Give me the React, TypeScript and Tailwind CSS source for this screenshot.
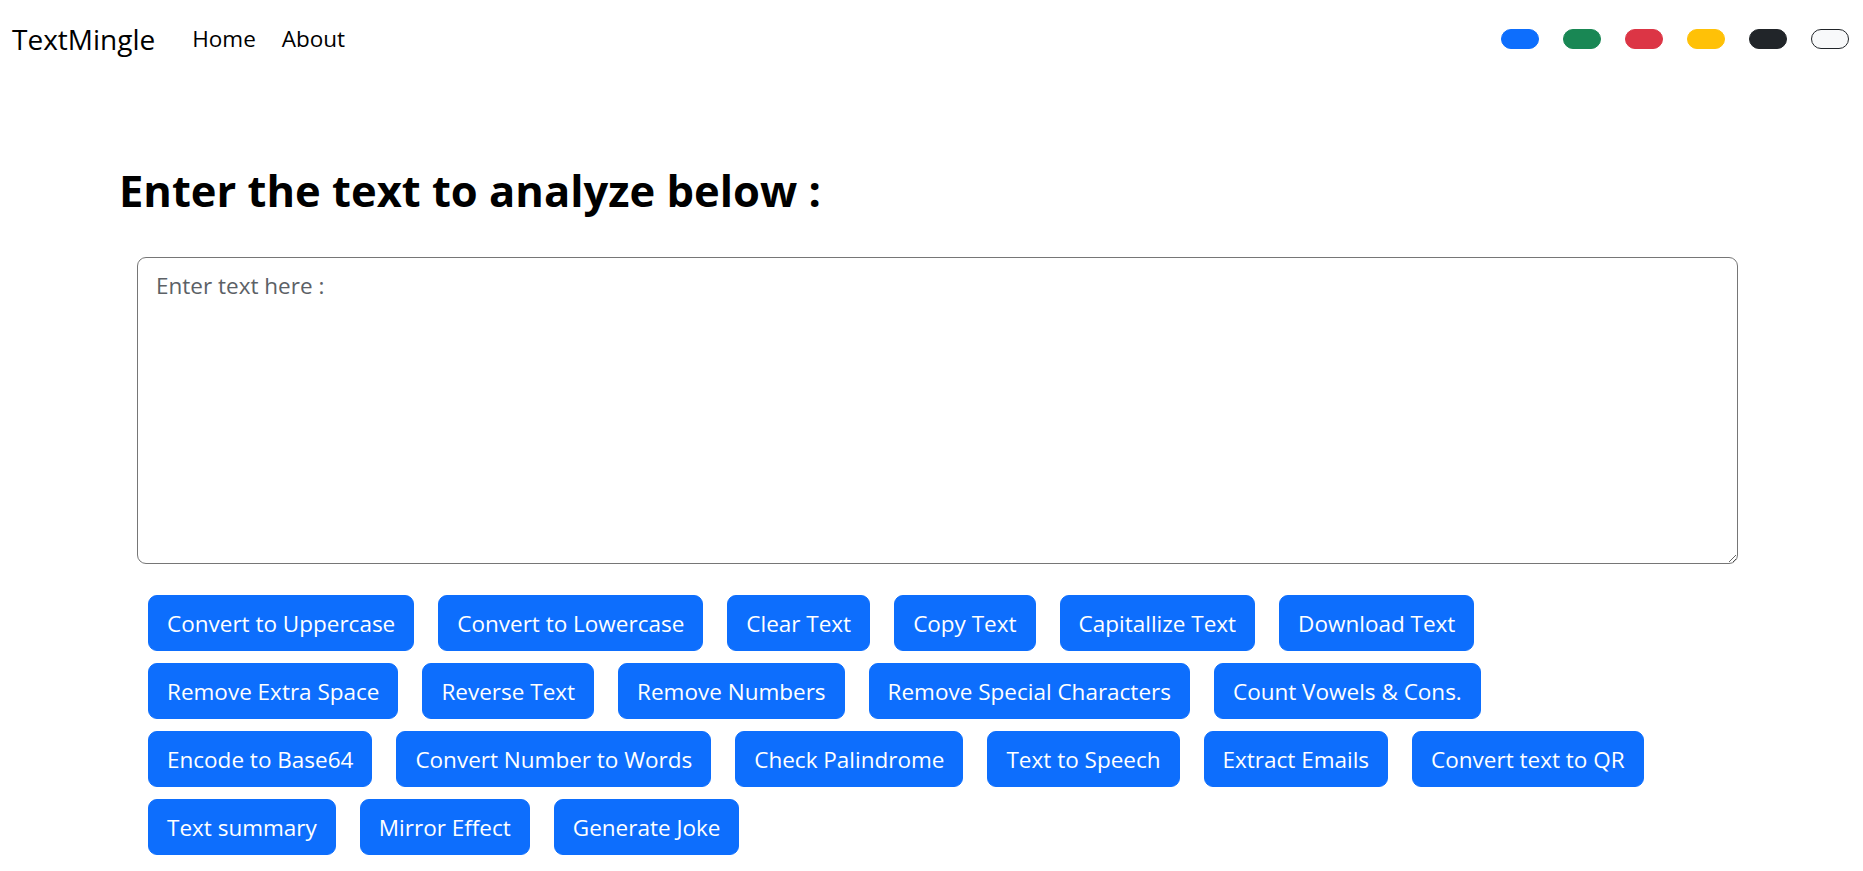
import React from "react";

const themes = [
  "bg-[#0d6efd] border-[#0d6efd]",
  "bg-[#198754] border-[#198754]",
  "bg-[#dc3545] border-[#dc3545]",
  "bg-[#ffc107] border-[#ffc107]",
  "bg-[#212529] border-[#212529]",
  "bg-[#f8f9fa] border-[#212529]",
];

const rows = [
  ["Convert to Uppercase", "Convert to Lowercase", "Clear Text", "Copy Text", "Capitallize Text", "Download Text"],
  ["Remove Extra Space", "Reverse Text", "Remove Numbers", "Remove Special Characters", "Count Vowels & Cons."],
  ["Encode to Base64", "Convert Number to Words", "Check Palindrome", "Text to Speech", "Extract Emails", "Convert text to QR"],
  ["Text summary", "Mirror Effect", "Generate Joke"],
];

const Navbar = () => {
  return (
    <nav className="flex h-[78px] items-center justify-between pl-[12px] pr-[14px]">
      <div className="flex items-center">
        <a className="text-[28px] text-black" href="#">
          TextMingle
        </a>
        <ul className="ml-[37px] flex gap-[26px] text-[22.5px] text-black">
          <li>Home</li>
          <li>About</li>
        </ul>
      </div>
      <div className="flex items-center gap-[24px]">
        {themes.map((t, i) => (
          <button key={i} className={`h-[20px] w-[38px] rounded-full border-[1.5px] ${t}`} />
        ))}
      </div>
    </nav>
  );
};

const App = () => {
  return (
    <div className="min-h-screen bg-white font-['Open_Sans',sans-serif] text-[#212529]">
      <Navbar />
      <div className="pt-[86px]">
        <h1 className="pl-[119px] text-[43.5px] font-bold leading-[54px] text-black">
          Enter the text to analyze below :
        </h1>
        <div className="mt-[39px] pl-[137px]">
          <textarea
            className="block h-[307px] w-[1601px] rounded-[9px] border border-[#767676] px-[18px] pt-[11px] pb-[9px] text-[22.5px] leading-[1.5] outline-none placeholder:text-[#5c6166]"
            placeholder="Enter text here :"
          />
        </div>
        <div className="mt-[31px] flex flex-col gap-[12px] pl-[148px]">
          {rows.map((row, i) => (
            <div key={i} className="flex gap-[24px]">
              {row.map((label) => (
                <button
                  key={label}
                  className="h-[56px] rounded-[9px] border-[1.5px] border-[#0d6efd] bg-[#0d6efd] px-[18px] pt-[2px] text-[22.5px] text-white"
                >
                  {label}
                </button>
              ))}
            </div>
          ))}
        </div>
      </div>
    </div>
  );
};

export default App;
